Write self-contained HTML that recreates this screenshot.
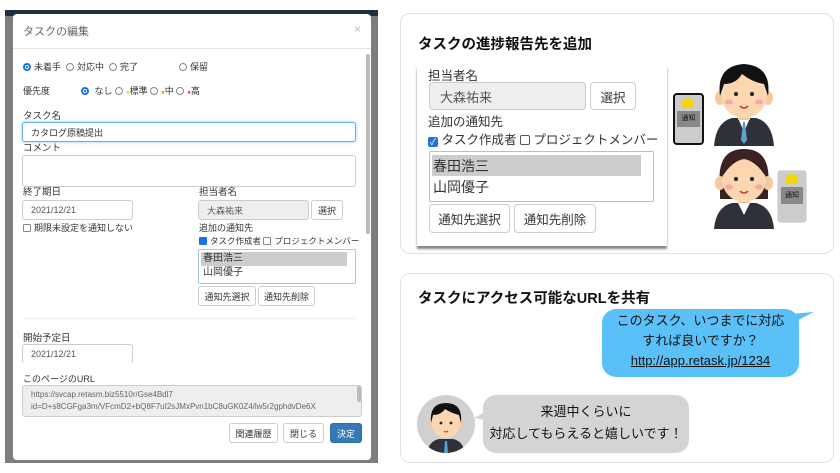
<!DOCTYPE html>
<html><head><meta charset="utf-8"><style>
*{box-sizing:border-box;margin:0;padding:0}
body{width:840px;height:473px;background:#fff;font-family:"Liberation Sans","Noto Sans CJK JP",sans-serif;position:relative;overflow:hidden;color:#333}
.a{position:absolute}
.bd{left:5px;top:10px;width:373px;height:453px;background:#7d7d7d}
.bar{left:5px;top:10px;width:373px;height:6px;background:#1b2f45}
.modal{left:13px;top:14px;width:358px;height:446px;background:#fff;border-radius:4px}
.t{font-size:9.5px;color:#333;white-space:nowrap;line-height:12px}
.inp{border:1px solid #ccc;border-radius:3px;background:#fff;font-size:9px;color:#555;padding:0 8px;display:flex;align-items:center}
.btn{border:1px solid #ccc;border-radius:3px;background:#fff;font-size:9px;color:#333;display:flex;align-items:center;justify-content:center}
.rd{display:inline-block;width:8px;height:8px;border:1px solid #888;border-radius:50%;vertical-align:-1px;margin-right:3px}
.rd.on{border:2px solid #1a73e8;background:radial-gradient(#1a73e8 40%,#fff 45%)}
.card{border:1px solid #e2e2e2;border-radius:10px;background:#fff}
.h{font-size:14.5px;font-weight:bold;color:#111}
.rin{border:1px solid #ccc;border-radius:4px;background:#eee;font-size:13px;color:#555;padding-left:10px;display:flex;align-items:center}
.rbt{border:1px solid #ccc;border-radius:4px;background:#fff;font-size:12.5px;color:#333;display:flex;align-items:center;justify-content:center}
</style></head><body>
<div class="a bd"></div><div class="a bar"></div>
<div class="a modal"></div>
<div class="a t" style="left:23px;top:26px;font-size:11px;color:#666">タスクの編集</div>
<div class="a t" style="left:354px;top:23px;font-size:12px;color:#bbb">×</div>
<div class="a" style="left:13px;top:48px;width:358px;height:1px;background:#e5e5e5"></div>
<div class="a" style="left:366px;top:54px;width:4px;height:180px;background:#bbb;border-radius:2px"></div>
<div class="a t" style="left:23px;top:61px;font-size:9px"><span class="rd on"></span>未着手 &nbsp;<span class="rd"></span>対応中 &nbsp;<span class="rd"></span>完了</div>
<div class="a t" style="left:179px;top:61px;font-size:9px"><span class="rd"></span>保留</div>
<div class="a t" style="left:23px;top:85px;font-size:9px">優先度</div>
<div class="a t" style="left:81px;top:85px;font-size:9px"><span class="rd on"></span> なし <span class="rd"></span><span style="color:#f5d400;font-size:6px">●</span>標準 <span class="rd"></span><span style="color:#f08a24;font-size:6px">●</span>中 <span class="rd"></span><span style="color:#e53935;font-size:6px">●</span>高</div>
<div class="a t" style="left:23px;top:111px">タスク名</div>
<div class="a inp" style="left:22px;top:122px;width:334px;height:20px;border-color:#66afe9;box-shadow:0 0 3px #9cc9ee;color:#333">カタログ原稿提出</div>
<div class="a t" style="left:23px;top:143px">コメント</div>
<div class="a inp" style="left:22px;top:155px;width:334px;height:32px"></div>
<div class="a t" style="left:23px;top:187px">終了期日</div>
<div class="a inp" style="left:22px;top:200px;width:111px;height:20px">2021/12/21</div>
<div class="a t" style="left:23px;top:222px;font-size:9px"><span class="rd" style="border-radius:1px"></span>期限未設定を通知しない</div>
<div class="a t" style="left:199px;top:187px">担当者名</div>
<div class="a inp" style="left:198px;top:200px;width:111px;height:20px;background:#eee">大森祐来</div>
<div class="a btn" style="left:311px;top:200px;width:32px;height:20px">選択</div>
<div class="a t" style="left:199px;top:222px;font-size:9px">追加の通知先</div>
<div class="a t" style="left:199px;top:235px;font-size:8.5px"><span class="rd" style="border-radius:1px;background:#1a73e8;border-color:#1a73e8"></span>タスク作成者 <span class="rd" style="border-radius:1px"></span>プロジェクトメンバー</div>
<div class="a" style="left:198px;top:249px;width:158px;height:35px;border:1px solid #a8c8d8;border-radius:2px"></div>
<div class="a" style="left:201px;top:252px;width:146px;height:14px;background:#ccc"></div>
<div class="a t" style="left:203px;top:253px;font-size:10px">春田浩三</div>
<div class="a t" style="left:203px;top:267px;font-size:10px">山岡優子</div>
<div class="a btn" style="left:198px;top:286px;width:58px;height:20px">通知先選択</div>
<div class="a btn" style="left:258px;top:286px;width:57px;height:20px">通知先削除</div>
<div class="a" style="left:22px;top:318px;width:334px;height:1px;background:#eee"></div>
<div class="a t" style="left:23px;top:333px">開始予定日</div>
<div class="a inp" style="left:22px;top:344px;width:111px;height:20px">2021/12/21</div>
<div class="a" style="left:13px;top:363px;width:358px;height:97px;background:#fff;border-radius:0 0 4px 4px"></div>
<div class="a t" style="left:23px;top:373px;font-size:9px">このページのURL</div>
<div class="a" style="left:22px;top:385px;width:340px;height:32px;background:#eee;border:1px solid #ccc;border-radius:3px;overflow:hidden;font-size:8px;color:#666;line-height:12px;padding:3px 8px;word-break:break-all">https://svcap.retasm.biz5510r/Gse4Bdl7<br>id=D+s8CGFga3m/VFcmD2+bQ8F7uI2sJMxPvn1bC8uGK0Z4/lw5r2gphdvDe6X</div>
<div class="a" style="left:357px;top:386px;width:4px;height:16px;background:#bbb;border-radius:2px"></div>
<div class="a btn" style="left:229px;top:423px;width:49px;height:20px">関連履歴</div>
<div class="a btn" style="left:283px;top:423px;width:41px;height:20px">閉じる</div>
<div class="a btn" style="left:330px;top:423px;width:32px;height:20px;background:#337ab7;border-color:#2e6da4;color:#fff">決定</div>

<div class="a card" style="left:400px;top:13px;width:434px;height:241px"></div>
<div class="a h" style="left:418px;top:33px">タスクの進捗報告先を追加</div>
<div class="a" style="left:417px;top:65px;width:250px;height:181px;background:#fff;box-shadow:0 3px 2px #888"></div>
<div class="a" style="left:428px;top:65px;font-size:12.5px">担当者名</div>
<div class="a rin" style="left:429px;top:82px;width:157px;height:28px">大森祐来</div>
<div class="a rbt" style="left:590px;top:82px;width:46px;height:28px">選択</div>
<div class="a" style="left:428px;top:111px;font-size:12.5px">追加の通知先</div>
<div class="a" style="left:428px;top:129px;font-size:12.5px;white-space:nowrap"><span style="display:inline-block;width:10px;height:10px;background:#1a73e8;border-radius:2px;color:#fff;font-size:9px;line-height:10px;text-align:center;vertical-align:-1px">✓</span> タスク作成者 <span style="display:inline-block;width:10px;height:10px;border:1px solid #555;border-radius:2px;vertical-align:-1px"></span> プロジェクトメンバー</div>
<div class="a" style="left:429px;top:151px;width:225px;height:51px;border:1px solid #a8c8d0;border-radius:2px"></div>
<div class="a" style="left:432px;top:155px;width:209px;height:21px;background:#ccc"></div>
<div class="a" style="left:433px;top:156px;font-size:14px">春田浩三</div>
<div class="a" style="left:433px;top:177px;font-size:14px">山岡優子</div>
<div class="a rbt" style="left:429px;top:204px;width:81px;height:29px">通知先選択</div>
<div class="a rbt" style="left:514px;top:204px;width:82px;height:29px">通知先削除</div>
<div class="a" style="left:673px;top:93px;width:31px;height:52px;border:2px solid #111;border-radius:4px;background:#ccc"></div>
<div class="a" style="left:682px;top:98px;width:12px;height:10px;background:#f2d600;border-radius:6px 6px 1px 1px"></div>
<div class="a" style="left:677px;top:111px;width:23px;height:16px;background:#888;font-size:7px;color:#111;text-align:center;line-height:16px">通知</div>
<div class="a" style="left:777px;top:170px;width:30px;height:53px;border:1px solid #ddd;border-radius:4px;background:#ccc"></div>
<div class="a" style="left:786px;top:174px;width:12px;height:10px;background:#f2d600;border-radius:6px 6px 1px 1px"></div>
<div class="a" style="left:781px;top:187px;width:22px;height:17px;background:#888;font-size:7px;color:#111;text-align:center;line-height:17px">通知</div>
<svg class="a" style="left:712px;top:62px" width="64" height="84" viewBox="0 0 64 84">
<path d="M2 84 Q4 60 20 56 L44 56 Q60 60 62 84Z" fill="#2e3238"/>
<path d="M26 56 L32 70 L38 56Z" fill="#fff"/><path d="M31 60 L29 78 L32 82 L35 78 L33 60Z" fill="#5aa0d0"/>
<rect x="26" y="46" width="12" height="12" fill="#f7c9a0"/>
<ellipse cx="8" cy="36" rx="5" ry="7" fill="#f7c9a0"/><ellipse cx="56" cy="36" rx="5" ry="7" fill="#f7c9a0"/>
<ellipse cx="32" cy="32" rx="23" ry="24" fill="#fbd6b0"/>
<path d="M8 34 Q4 4 32 2 Q60 4 56 34 L52 22 Q40 20 30 12 Q24 22 12 22Z" fill="#111"/>
<circle cx="24" cy="32" r="2" fill="#222"/><circle cx="40" cy="32" r="2" fill="#222"/>
<ellipse cx="17" cy="40" rx="4" ry="2.5" fill="#f8a8a0"/><ellipse cx="47" cy="40" rx="4" ry="2.5" fill="#f8a8a0"/>
<path d="M28 44 Q32 48 36 44" stroke="#c33" stroke-width="1.5" fill="none"/>
</svg>
<svg class="a" style="left:712px;top:147px" width="64" height="82" viewBox="0 0 64 82">
<path d="M2 82 Q4 60 20 56 L44 56 Q60 60 62 82Z" fill="#2e3238"/>
<path d="M26 56 L32 68 L38 56Z" fill="#fff"/>
<path d="M8 40 Q4 2 32 2 Q60 2 56 40 L56 52 L8 52Z" fill="#3a2220"/>
<rect x="26" y="44" width="12" height="12" fill="#f7c9a0"/>
<ellipse cx="8" cy="36" rx="5" ry="7" fill="#f7c9a0"/><ellipse cx="56" cy="36" rx="5" ry="7" fill="#f7c9a0"/>
<ellipse cx="32" cy="32" rx="22" ry="23" fill="#fbd6b0"/>
<path d="M10 30 Q10 6 32 6 Q54 6 54 30 Q44 14 32 12 Q20 14 10 30Z" fill="#3a2220"/>
<circle cx="24" cy="32" r="2" fill="#222"/><circle cx="40" cy="32" r="2" fill="#222"/>
<ellipse cx="17" cy="40" rx="4" ry="2.5" fill="#f8a8a0"/><ellipse cx="47" cy="40" rx="4" ry="2.5" fill="#f8a8a0"/>
<path d="M28 44 Q32 48 36 44" stroke="#c33" stroke-width="1.5" fill="none"/>
</svg>

<div class="a card" style="left:400px;top:273px;width:434px;height:190px"></div>
<div class="a h" style="left:418px;top:287px">タスクにアクセス可能なURLを共有</div>
<div class="a" style="left:602px;top:309px;width:197px;height:68px;background:#5ac0f8;border-radius:14px"></div>
<svg class="a" style="left:790px;top:312px" width="26" height="14"><path d="M0 2 L24 0 L0 12Z" fill="#5ac0f8"/></svg>
<div class="a" style="left:602px;top:311px;width:197px;text-align:center;font-size:13px;line-height:20px;color:#111">このタスク、いつまでに対応<br>すれば良いですか？<br><u>http://app.retask.jp/1234</u></div>
<div class="a" style="left:483px;top:395px;width:206px;height:58px;background:#d4d4d4;border-radius:13px"></div>
<svg class="a" style="left:474px;top:410px" width="14" height="12"><path d="M14 0 L0 8 L14 11Z" fill="#d4d4d4"/></svg>
<div class="a" style="left:483px;top:401px;width:206px;text-align:center;font-size:13px;line-height:22px;color:#111">来週中くらいに<br>対応してもらえると嬉しいです！</div>
<svg class="a" style="left:417px;top:395px" width="58" height="58" viewBox="0 0 58 58">
<defs><clipPath id="c"><circle cx="29" cy="29" r="29"/></clipPath></defs>
<circle cx="29" cy="29" r="29" fill="#d0d0d0"/>
<g clip-path="url(#c)">
<path d="M10 58 Q12 46 22 44 L36 44 Q46 46 48 58Z" fill="#2e3238"/>
<path d="M28 46 L27 58 L31 58 L30 46Z" fill="#5aa0d0"/>
<ellipse cx="15" cy="29" rx="3" ry="5" fill="#f7c9a0"/><ellipse cx="43" cy="29" rx="3" ry="5" fill="#f7c9a0"/>
<ellipse cx="29" cy="28" rx="14" ry="15" fill="#fbd6b0"/>
<path d="M14 28 Q12 8 29 8 Q46 8 44 28 L42 20 Q34 18 28 14 Q24 20 16 20Z" fill="#111"/>
<circle cx="24" cy="28" r="1.4" fill="#222"/><circle cx="34" cy="28" r="1.4" fill="#222"/>
<path d="M27 36 Q29 38 31 36" stroke="#c33" stroke-width="1" fill="none"/>
</g></svg>
</body></html>
